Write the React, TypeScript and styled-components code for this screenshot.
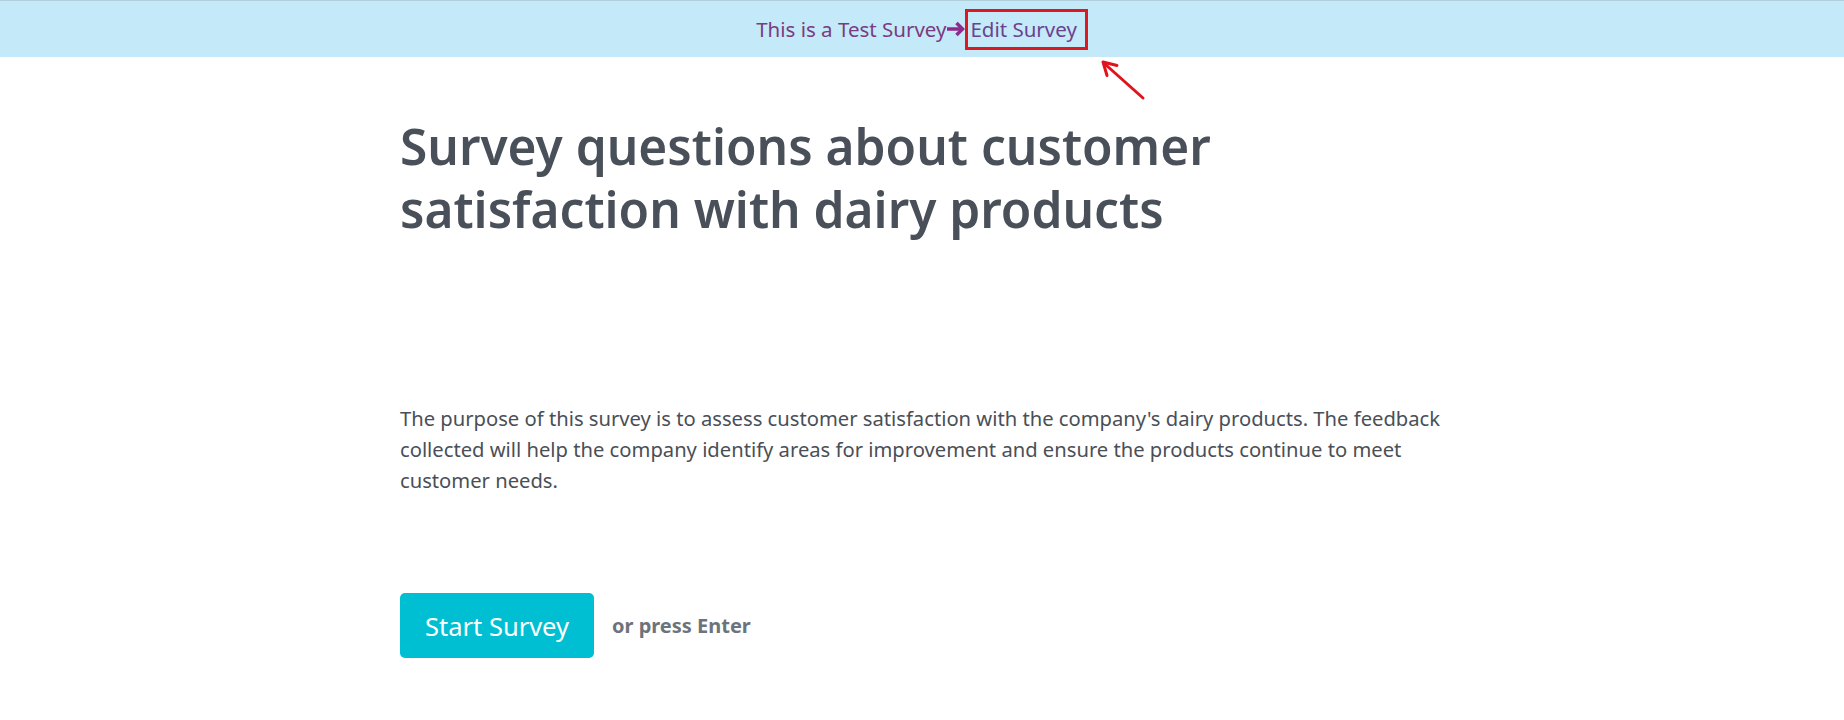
import styled, { createGlobalStyle } from "styled-components";

const GlobalStyle = createGlobalStyle`
  body {
    margin: 0;
    background: #ffffff;
    font-family: "Noto Sans", "Open Sans", sans-serif;
  }
`;

const TestBanner = styled.div`
  position: relative;
  height: 56px;
  border-top: 1px solid #b0cfdc;
  background-color: #c4e9f8;
  display: flex;
  align-items: center;
  justify-content: center;
  font-size: 20.5px;
  color: #7a3b80;
`;

const BannerText = styled.span`
  line-height: 1;
`;

const EditLink = styled.a`
  display: flex;
  align-items: center;
  height: 35px;
  padding: 0 8px 0 2px;
  border: 3px solid #dc1820;
  color: #6a4290;
  text-decoration: none;
  line-height: 1;
`;

const Pointer = styled.svg`
  position: absolute;
  left: 1098px;
  top: 57px;
`;

const Main = styled.main`
  width: 1044px;
  margin: 0 auto;
  color: #4a4f57;
`;

const Title = styled.h1`
  margin: 58px 0 0;
  font-size: 49.6px;
  font-weight: 600;
  line-height: 63px;
  color: #4a5059;
`;

const Description = styled.p`
  margin: 162px 0 0;
  font-size: 20.2px;
  line-height: 31px;
  color: #4a4f57;
`;

const Actions = styled.div`
  display: flex;
  align-items: center;
  gap: 18px;
  margin-top: 97px;
`;

const StartButton = styled.button`
  height: 65px;
  padding: 0 25px;
  border: none;
  border-radius: 5px;
  background-color: #00bfd2;
  color: #ffffff;
  font-family: inherit;
  font-size: 25.5px;
  cursor: pointer;
`;

const Hint = styled.span`
  font-size: 20px;
  font-weight: 700;
  color: #6d737b;
`;

const ArrowRight = () => (
  <svg width="19" height="16" viewBox="0 0 19 16">
    <path d="M1 8h14" stroke="#8e2a8e" strokeWidth="3.5" />
    <path d="M10.5 2L16.5 8l-6 6" fill="none" stroke="#8e2a8e" strokeWidth="3.5" />
  </svg>
);

const App: React.FC = () => {
  return (
    <>
      <GlobalStyle />
      <TestBanner>
        <BannerText>This is a Test Survey</BannerText>
        <ArrowRight />
        <EditLink href="#">Edit Survey</EditLink>
        <Pointer width="50" height="44" viewBox="0 0 50 44">
          <path d="M45 40L8 7" stroke="#e0141c" strokeWidth="3" strokeLinecap="round" />
          <path d="M5 4l14 3.5M5 4l4 13.5" stroke="#e0141c" strokeWidth="3" strokeLinecap="round" />
        </Pointer>
      </TestBanner>
      <Main>
        <Title>Survey questions about customer satisfaction with dairy products</Title>
        <Description>
          The purpose of this survey is to assess customer satisfaction with the company's dairy
          products. The feedback collected will help the company identify areas for improvement
          and ensure the products continue to meet customer needs.
        </Description>
        <Actions>
          <StartButton>Start Survey</StartButton>
          <Hint>or press Enter</Hint>
        </Actions>
      </Main>
    </>
  );
};

export default App;
